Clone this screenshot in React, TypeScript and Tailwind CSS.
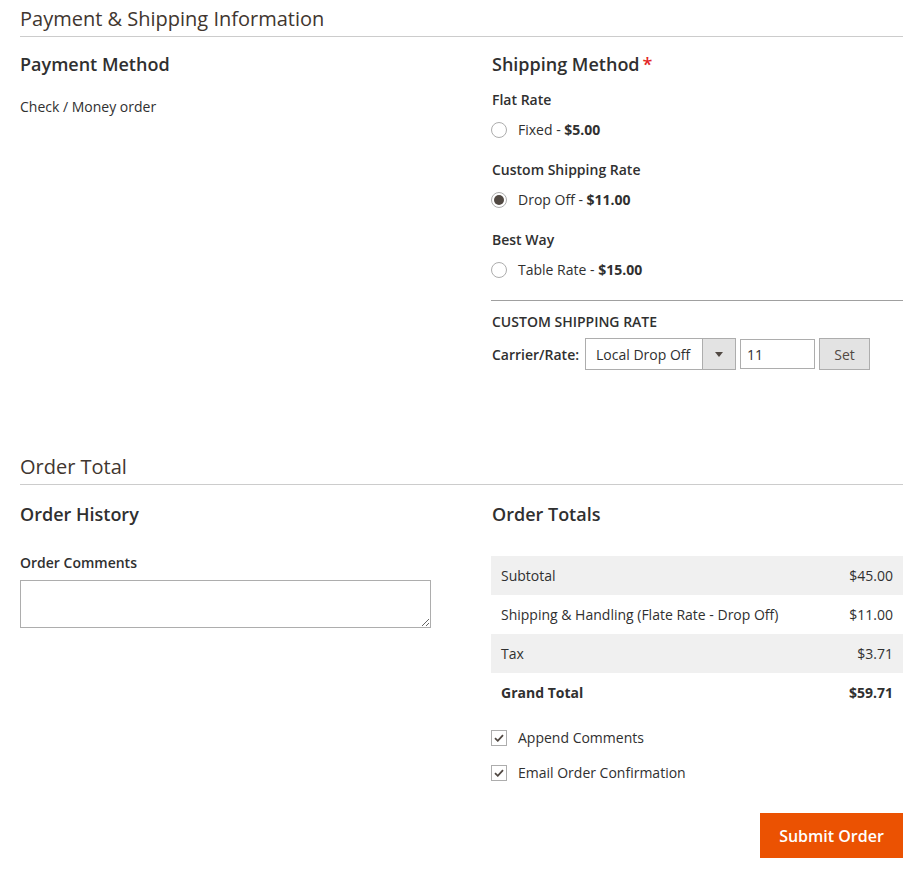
import React from "react";

const font = { fontFamily: '"Open Sans", "Liberation Sans", sans-serif' };

function Radio({ checked }: { checked?: boolean }) {
  return (
    <span className="flex h-[16px] w-[16px] items-center justify-center rounded-full border border-[#adadad] bg-white">
      {checked && <span className="h-[10px] w-[10px] rounded-full bg-[#514943]" />}
    </span>
  );
}

function Check() {
  return (
    <span className="flex h-[16px] w-[16px] items-center justify-center border border-[#adadad] bg-white">
      <svg width="10" height="8" viewBox="0 0 10 8">
        <path d="M1 4.2 L3.8 6.8 L9 1.2" fill="none" stroke="#514943" strokeWidth="1.8" />
      </svg>
    </span>
  );
}

function SectionTitle({ children }: { children: React.ReactNode }) {
  return (
    <div className="border-b border-[#cccccc] pb-[3px]">
      <h2 className="text-[20px] leading-[28px] text-[#41362f]">{children}</h2>
    </div>
  );
}

function RateGroup({ title, label, price, checked }: { title: string; label: string; price: string; checked?: boolean }) {
  return (
    <div className="mb-[20px]">
      <div className="ml-[1px] text-[14px] font-semibold leading-[20px]">{title}</div>
      <label className="mt-[10px] flex items-center gap-[11px] text-[14px] leading-[20px]">
        <Radio checked={checked} />
        <span>
          {label} - <b className="font-bold">{price}</b>
        </span>
      </label>
    </div>
  );
}

export default function App() {
  const totals = [
    { label: "Subtotal", value: "$45.00", shaded: true },
    { label: "Shipping & Handling (Flate Rate - Drop Off)", value: "$11.00" },
    { label: "Tax", value: "$3.71", shaded: true },
  ];

  return (
    <div style={font} className="min-h-[881px] bg-white pl-[20px] pr-[9px] text-[#303030]">
      {/* PAYMENT & SHIPPING */}
      <section className="pt-[5px]">
        <SectionTitle>Payment &amp; Shipping Information</SectionTitle>
        <div className="grid grid-cols-[411px_1fr] gap-[60px] pt-[14px]">
          <div>
            <h3 className="text-[18px] font-semibold leading-[26px]">Payment Method</h3>
            <p className="mt-[20px] text-[14px] leading-[20px]">Check / Money order</p>
          </div>
          <div>
            <h3 className="ml-[1px] text-[18px] font-semibold leading-[26px]">
              Shipping Method<span className="ml-[3px] text-[#e22626]">*</span>
            </h3>
            <div className="mt-[13px]">
              <RateGroup title="Flat Rate" label="Fixed" price="$5.00" />
              <RateGroup title="Custom Shipping Rate" label="Drop Off" price="$11.00" checked />
              <RateGroup title="Best Way" label="Table Rate" price="$15.00" />
            </div>
            <div className="border-t border-[#a0a0a0] pt-[11px]">
              <div className="ml-[1px] text-[14px] font-semibold uppercase leading-[20px]">Custom Shipping Rate</div>
              <div className="mt-[6px] flex items-center">
                <span className="ml-[1px] mr-[6px] text-[14px] font-semibold">Carrier/Rate:</span>
                <div className="flex h-[32px] w-[151px] border border-[#adadad]">
                  <span className="flex flex-1 items-center pl-[10px] text-[14px]">Local Drop Off</span>
                  <span className="flex w-[33px] items-center justify-center border-l border-[#adadad] bg-[#e3e3e3]">
                    <svg width="8" height="5" viewBox="0 0 8 5">
                      <path d="M0 0 H8 L4 5 Z" fill="#514943" />
                    </svg>
                  </span>
                </div>
                <div className="ml-[4px] flex h-[30px] w-[75px] items-center border border-[#adadad] pl-[6px] text-[14px]">11</div>
                <button className="ml-[4px] h-[32px] w-[51px] border border-[#adadad] bg-[#e3e3e3] text-[14px] text-[#514943]">
                  Set
                </button>
              </div>
            </div>
          </div>
        </div>
      </section>

      {/* ORDER TOTAL */}
      <section className="mt-[83px]">
        <SectionTitle>Order Total</SectionTitle>
        <div className="grid grid-cols-[411px_1fr] gap-[60px] pt-[16px]">
          <div>
            <h3 className="text-[18px] font-semibold leading-[26px]">Order History</h3>
            <div className="mt-[26px] text-[14px] font-semibold leading-[20px]">Order Comments</div>
            <textarea className="mt-[7px] block h-[48px] w-[411px] border border-[#adadad] outline-none" />
          </div>
          <div>
            <h3 className="ml-[1px] text-[18px] font-semibold leading-[26px]">Order Totals</h3>
            <div className="mt-[29px] text-[14px]">
              {totals.map((t) => (
                <div
                  key={t.label}
                  className={`flex h-[39px] items-center justify-between px-[10px] ${t.shaded ? "bg-[#f0f0f0]" : ""}`}
                >
                  <span>{t.label}</span>
                  <span>{t.value}</span>
                </div>
              ))}
              <div className="flex h-[39px] items-center justify-between px-[10px] font-bold">
                <span>Grand Total</span>
                <span>$59.71</span>
              </div>
            </div>
            <div className="mt-[16px] flex flex-col gap-[15px] text-[14px]">
              <label className="flex items-center gap-[11px] leading-[20px]">
                <Check />
                Append Comments
              </label>
              <label className="flex items-center gap-[11px] leading-[20px]">
                <Check />
                Email Order Confirmation
              </label>
            </div>
            <div className="mt-[30px] flex justify-end">
              <button className="h-[45px] w-[143px] bg-[#eb5202] text-[16px] font-semibold text-white">
                Submit Order
              </button>
            </div>
          </div>
        </div>
      </section>
    </div>
  );
}
